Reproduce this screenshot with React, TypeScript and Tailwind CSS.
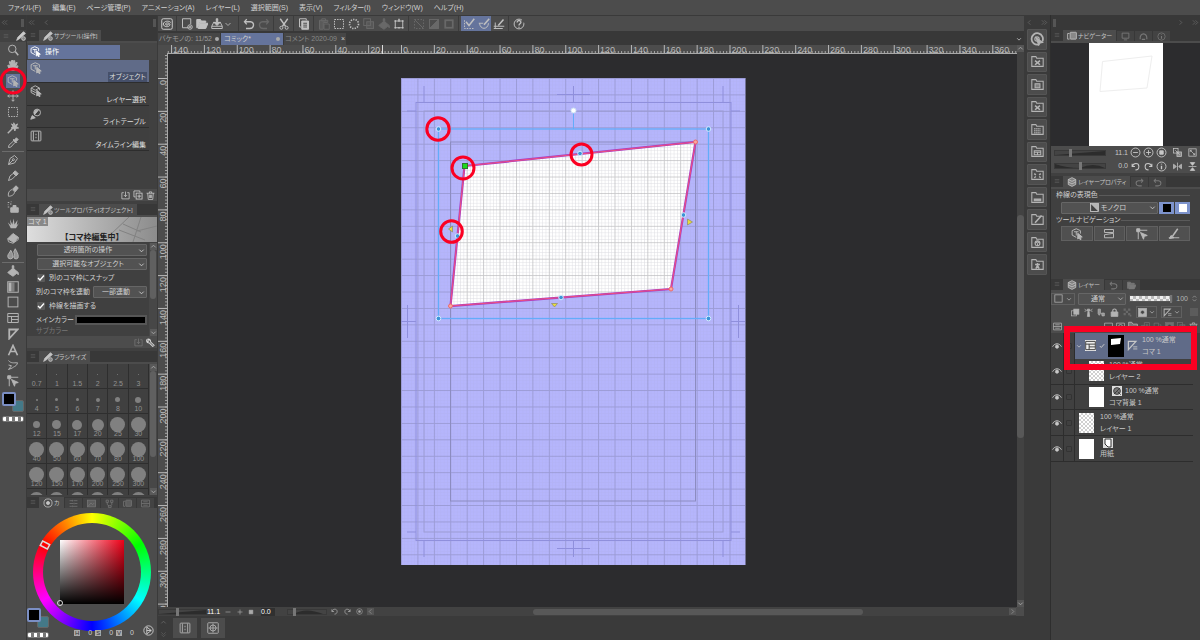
import type { ReactNode } from "react";
import clsx from "clsx";

const icons = {
  menu: <path d="M2 4h12M2 8h12M2 12h12" />,
  left: <path d="M10 3 5 8l5 5" />,
  right: <path d="m6 3 5 5-5 5" />,
  dleft: <path d="M8 3 3 8l5 5M14 3 9 8l5 5" />,
  dright: <path d="m2 3 5 5-5 5M8 3l5 5-5 5" />,
  down: <path strokeWidth="2" d="m3 6 5 5 5-5" />,
  up: <path strokeWidth="2" d="m3 10 5-5 5 5" />,
  ddown: <path d="m3 3 5 5 5-5M3 8l5 5 5-5" />,
  updown: <path d="m4 6 4-4 4 4M4 10l4 4 4-4" />,
  search: <><circle cx="7" cy="6.500" r="5" /><path d="m11 10 4 5" strokeWidth="2" /></>,
  hand: <path fill="currentColor" d="M4 15 1 9l1-1 3 2-2-6 1-1 2 5V2h2v6l1-6 1.500.5L9.500 8l3-4 1 1-2 5 3-1v1l-3 5z" />,
  object: <><path d="M7 12.500 1.500 9.500v-6L7 1l5.500 2.500v4M4 5h6M7 5v5" /><path fill="currentColor" d="m9 7 6 5-2.800.3L13.500 15l-1.300.5-1.200-2.500-2 1.700z" /></>,
  layerPick: <><path d="m1.500 4 5.500-3 5.500 3L7 7zM1.500 7 7 10l1.500-.8M1.500 10 7 13M1.500 4v6M12.500 4v3" /><path fill="currentColor" d="m9 7 6 5-2.800.3L13.500 15l-1.300.5-1.200-2.500-2 1.700z" /></>,
  move: <path d="M8 1v14M1 8h14M6 3l2-2 2 2M6 13l2 2 2-2M3 6 1 8l2 2M13 6l2 2-2 2" />,
  marquee: <rect x="2" y="2" width="12" height="12" strokeDasharray="2 1.400" />,
  wand: <><path d="m1 15 7-7" strokeWidth="2" /><path fill="currentColor" d="m9 1 1.500 3.500L14 2.500l-1.500 3.700L15.500 8l-4 .5L10.500 12 9 8.500 5.500 8l2.500-2-2-3.500 3 2z" /></>,
  dropper: <><path d="m2 14 .5-3L9 5l2 2-6 6.500z" /><path fill="currentColor" d="m8 4 1-1 1 1 2.500-3 2.500 2.500L12 6l1 1-1 1z" /></>,
  pen: <><path d="m2 14 2-8 6-4 4 4-4 6z" /><path d="m2 14 6-6" /><circle cx="8.500" cy="7.500" r="1.300" /></>,
  pencil: <><path d="m2 14 2-6 5-4 3 3-5 5z" /><path fill="currentColor" d="m8 4 3-3 4 4-3 3z" /></>,
  brush: <><path d="M2 15c-1-4 1-8 5-9l3 3c0 4-4 6-8 6z" /><path fill="currentColor" d="m8 5 4-4 3 3-4 5z" /></>,
  airbrush: <><path fill="currentColor" d="M5 9h10v6H5zM8 6h4v3H8z" /><path d="M1 2h2M1 5h1M4 4h2M1 8h2M5 1h1" /></>,
  grass: <path fill="currentColor" stroke="none" d="M5 15 1 7l4 4-1-8 3 7 2-8 1 8 4-6-1 7 3-3-4 7z" />,
  eraser: <><path fill="currentColor" d="m1 9 7-7 7 5-6 7z" /><path d="m1 9 1 4 6 2 7-5V7" /></>,
  blend: <path fill="currentColor" d="M5 3c2 4 3 5 3 8a3.500 3.500 0 0 1-7 0c0-3 3-5 4-8zm6-2c2 4 4 7 4 10a3 3 0 0 1-6 1c2-3 0-6 0-7z" fillOpacity=".7" />,
  bucket: <path fill="currentColor" d="m1 10 6-5V1h2v4l6 5v3l-2-2-5 4-6-4z" />,
  gradient: <><rect x="1" y="1" width="14" height="14" /><path stroke="none" fill="currentColor" d="M2 2h4v12H2z" /><path stroke="none" fill="currentColor" fillOpacity=".5" d="M6 2h4v12H6z" /></>,
  rect: <rect x="1.500" y="1.500" width="13" height="13" />,
  frame: <path d="M1 2h14v12H1zM1 6h14M6 6v8M6 10h9" />,
  ruler: <path strokeWidth="2.400" d="M3 14V2h11z" />,
  letter: <path strokeWidth="2.200" d="M2 15 8 2l6 13M4.500 10h7" />,
  balloon: <path d="M2 2c3 4 7 3 12 3-1 5-5 5-7 7l-5 2 4-5-4-1" />,
  node: <><path d="M1 3h4M5 3h10M3 5v10" /><path fill="currentColor" d="M1 1h4v4H1zM6 6l9 4-4 1-1 4z" /></>,
  spiral: <><rect x="1" y="1" width="14" height="14" rx="2" /><path d="M13 6C10 3 4 4 3 8c0 4 8 5 9 1 0-3-6-3-6-1 0 2 4 2 4 0" /></>,
  fileNew: <><path d="M10 13H2V1h11v7" /><circle cx="12" cy="12" r="3" /><path d="M12 10.500v3M10.500 12h3" /></>,
  open: <path fill="currentColor" d="M1 13V2h5l1 2h6v2H5l-3 7zM5 7h11l-3 7H3z" />,
  save: <><path fill="currentColor" d="M7 1h2v5h3l-4 4-4-4h3z" /><path d="M4 5 1 11v3h14v-3l-3-6M1 11h14" /></>,
  undo: <path strokeWidth="1.800" d="M5 1.500 2 5l3 3.500M2 5h8c6 1 5 9-1 9H4" />,
  redo: <path strokeWidth="1.800" d="m11 1.500 3 3.500-3 3.500M14 5H6c-6 1-5 9 1 9h5" />,
  cut: <><path strokeWidth="1.800" d="m3 1 7 10M13 1 6 11" /><circle cx="4.500" cy="13" r="2" /><circle cx="11.500" cy="13" r="2" /></>,
  copy: <><path d="M4 12H2V1h9v2" /><path fill="currentColor" d="M5 4h9v11H5z" /><path stroke="#4c4c4c" d="M7 7h5M7 9.500h5M7 12h5" /></>,
  paste: <><path fill="currentColor" fillOpacity=".5" d="M2 3h11v3H7v9H2z" /><path d="M5 1h5v3H5zM8 8h7v7H8z" /></>,
  dots: <circle cx="8" cy="8" r="6" strokeWidth="2.200" strokeDasharray="1.700 1.600" />,
  stack: <><rect x="1" y="1" width="9" height="9" /><rect x="5" y="5" width="9" height="9" fill="currentColor" fillOpacity=".4" /></>,
  transform: <><rect x="3" y="4" width="10" height="9" /><path strokeWidth="2" d="M2 4h2M12 4h2M2 13h2M12 13h2M7 4h2M7 13h2M8 1v2" /></>,
  slash: <><rect x="2" y="2" width="12" height="12" strokeDasharray="2 2" /><path d="m2 2 12 12" /></>,
  half: <><rect x="2" y="2" width="12" height="12" /><path fill="currentColor" d="M14 2v12H2z" /></>,
  thick: <rect x="3" y="3" width="10" height="10" strokeWidth="2.400" />,
  snap: <><path d="M2 3v11h12" strokeDasharray="2 1.500" /><path strokeWidth="2" d="m4 5 4 5 7-9" /></>,
  snapCurve: <><path d="M1 7h6M2 7c1 9 11 9 12 0" /><path strokeWidth="2" d="m8 9 7-8" /></>,
  snapGrid: <><path d="M1 11h14M1 14h12M3 6v8" /><path strokeWidth="2" d="m7 10 7-8" /></>,
  help: <><circle cx="8" cy="8" r="6.500" strokeDasharray="34 4" /><path strokeWidth="1.800" d="M5.500 6c0-4 5.500-3 5 0-.5 2-2.500 1.500-2.500 4M8 11.500v1.500" /></>,
  toolTab: <><path fill="currentColor" d="m1 15 2-5 9-9 3 3-9 8z" /><circle cx="12" cy="12" r="3" fill="currentColor" fillOpacity=".5" /></>,
  bulb: <><circle cx="9.500" cy="6" r="4.500" /><path fill="currentColor" d="m1 15 2-5 4 3zM6 5c1-2 3-3 5-2L6 9z" /></>,
  film: <><rect x="1.500" y="1.500" width="13" height="13" rx="1" /><path d="M4.500 2v12M11.500 2v12M8 5v2M8 9v2" /></>,
  target: <><rect x="1" y="1" width="14" height="14" rx="1" /><circle cx="8" cy="8" r="4" /><path d="M8 2v12M2 8h12" /></>,
  addDown: <><path d="M5 3H1.500v11h13V3H11" /><path d="M8 1v9M5 7l3 3 3-3" /></>,
  addCopy: <><path d="M4 11H1.500V1.500H11V4" /><rect x="5" y="5" width="9.500" height="9.500" /><path d="M9.800 7v6M7 9.800h6" /></>,
  trash: <><path d="M1 4h14M6 4V1.500h4V4M3 4l1 11h8l1-11M6 6.500v6M8 6.500v6M10 6.500v6" /></>,
  wrench: <path strokeWidth="1.800" d="M14.500 13 8 7c1-3-2-6-5-5l2.500 2.500-2 2L1 4c0 3 2 5 5 5l6 6z" />,
  ring: <><circle cx="8" cy="8" r="6.500" /><circle cx="8" cy="8" r="2.500" fill="currentColor" /></>,
  sliders: <path d="M1 3h5M8 3h7M1 8h7M10 8h5M1 13h4M7 13h8M6 1.500v3M9 6.500v3M6 11.500v3" />,
  photo: <><rect x="1" y="2" width="14" height="12" fill="currentColor" fillOpacity=".5" /><path d="m2 13 5-6 3 3 3-3" /></>,
  swatches: <path d="M2 2h4v4H2zM10 2h4v4h-4zM6 12h5v3H6zM4 6v4l3 2M12 6v4l-2 2" />,
  layers: <path fill="currentColor" fillOpacity=".45" d="M8 1 2 4v8l6 3 6-3V4zM2 4l6 3 6-3M2 8l6 3 6-3" />,
  docs: <><path d="M4 13H1V4h3" /><rect x="5" y="2" width="10" height="11" rx="1" fill="currentColor" fillOpacity=".5" /></>,
  info: <><circle cx="8" cy="8" r="6.500" /><path strokeWidth="2" d="M8 7v5M8 4v1" /></>,
  arch: <path strokeWidth="2" d="M2 13c-1-13 13-13 12 0M5 13h6" />,
  monitor: <path strokeWidth="1.600" d="M2 2h12v9H2zM5 14h6" />,
  minusO: <><circle cx="8" cy="8" r="6.500" /><path d="M4.500 8h7" /></>,
  plusO: <><circle cx="8" cy="8" r="6.500" /><path d="M4.500 8h7M8 4.500v7" /></>,
  squareO: <><circle cx="8" cy="8" r="6.500" /><path fill="currentColor" d="M5.500 5.500h5v5h-5z" /></>,
  minus: <path d="M3 8h10" />,
  plus: <path d="M3 8h10M8 3v10" />,
  stop: <path fill="currentColor" d="M3 3h10v10H3z" />,
  fit: <><rect x="1" y="1" width="8" height="8" /><rect x="7" y="7" width="8" height="8" fill="currentColor" fillOpacity=".5" /><path d="m4 4 8 8" /></>,
  expand: <><rect x="1.500" y="1.500" width="13" height="13" /><path d="m4 4 8 8M4 7V4h3M12 9v3H9" /></>,
  ccw: <path strokeWidth="1.800" d="M2 3v5h5M2.500 8C4 1 14 1 14 8c0 4-3 6-6 6" />,
  cw: <path strokeWidth="1.800" d="M14 3v5H9M13.500 8C12 1 2 1 2 8c0 4 3 6 6 6" />,
  flipH: <path fill="currentColor" d="M8 1v14M15 4v8l-5-4zM1 4v8l5-4z" fillOpacity=".7" />,
  flipV: <path fill="currentColor" d="M1 8h14M4 1h8L8 6zM4 15h8l-4-5z" />,
  quick: <><path strokeWidth="2" d="M14 11A6.500 6.500 0 1 0 10 14.200" /><path fill="currentColor" d="M7 6.500 14.500 12l-3 .5-1.500 2.500z" /><circle cx="8" cy="8" r="2.500" /></>,
  mono: <><rect x="1" y="1" width="14" height="14" fill="currentColor" fillOpacity=".8" /><path fill="#444" stroke="none" d="M2 2v12h12z" /></>,
  cutFrame: <path d="M2 6V2h12v4zM2 9l12-2v6H2z" />,
  lineTool: <><path strokeWidth="2" d="M6 11 13 1" /><path d="M1 13h14" /><path fill="currentColor" d="m2 14 2-4 4 3z" /></>,
  eye: <><path strokeWidth="1.600" d="M1 9c3-6 11-6 14 0" /><circle cx="8" cy="9" r="2.500" fill="currentColor" /></>,
  mask: <><rect x="1" y="1" width="14" height="14" fill="currentColor" /><circle cx="8" cy="7.500" r="3.500" fill="#444" /></>,
  tone: <><circle cx="8" cy="8" r="5.500" fill="#777" /><path d="m9 9 5 5M3 13l10-10" /></>,
  rulerTri: <><path strokeWidth="1.800" d="M2 14V2h11z" /><path d="M9 10h6M9 13h6" /></>,
  clip: <><rect x="1" y="5" width="9" height="9" /><rect x="5" y="2" width="9" height="9" fill="currentColor" /></>,
  lighthouse: <path fill="currentColor" d="M6 2h4l1 3H5zM7 6h2l1 9H6zM1 2l3 2M15 2l-3 2M1 6l3-1M15 6l-3-1" />,
  quill: <path fill="currentColor" d="M2 2h4v8l-2 3-2-3zM8 9h5v5H9z" fillOpacity=".7" />,
  lock: <><path fill="currentColor" d="M2 7h12v8H2z" /><path strokeWidth="2" d="M5 7V4c0-3 6-3 6 0v3" /></>,
  checker: <path stroke="none" fill="currentColor" d="M1 1h4v4H1zM9 1h4v4H9zM5 5h4v4H5zM1 9h4v4H1zM9 9h4v4H9zM12 12h3v3h-3z" />,
  palette: <path d="M1 2h14v12H1zM1 8h14M4 5h8M4 11h8" />,
  rasterAdd: <path d="M8 14H1V2h14v8M12 10v5M9.500 12.500h5" />,
  vectorAdd: <><path d="M1 2h14v12H1z" /><circle cx="8" cy="8" r="3.500" /></>,
  folder: <path fill="currentColor" fillOpacity=".4" d="M1 14V2h5l2 3h7v9z" />,
  transfer: <path d="M6 6H1v9h8v-3M6 1h9v9H6zM8 5.500h5M10.500 3v5" />,
  merge: <path d="M2 2h8v6H2zM6 10v4h8V5h-2" />,
  check: <path strokeWidth="2.600" d="m2 8 4 4 8-9" />,
  play: <><circle cx="8" cy="8" r="6.800" /><path d="m5.500 3 6.500 5-6.500 5zM5.500 8H12" /></>,
  folderX: <path strokeWidth="2" d="m5 7 6 5M11 7l-6 5" />,
  folderTone: <path strokeWidth="1.800" strokeDasharray="1.500 1" d="M4 7h8M4 9.500h8M4 12h8" />,
  folderBox: <path fill="currentColor" fillOpacity=".5" d="M5 7h6v5H5z" />,
  folderFrame: <path d="M4 7h8v5H4zM4 9h8M8 9v3" />,
  folderMove: <path strokeWidth="1.800" d="m4 7 2 1.500M12 7l-2 1.500M4 12l2-1.500M12 12l-2-1.500" />,
  folderImg: <path fill="currentColor" d="M4 10h8v2H4z" />,
  folderEdit: <path strokeWidth="2" d="m5 12 8-9" />,
  folderUser: <><circle cx="8" cy="9" r="3" /><path d="m5 9 3-2 3 2M8 9v3" /></>,
  folderMan: <path strokeWidth="1.800" d="M8 6v3M5 8h6M8 9l-2 4M8 9l2 4" />,
};

type IconName = keyof typeof icons;

function Icon({ name, className = "size-3" }: { name: IconName; className?: string }) {
  return (
    <svg viewBox="0 0 16 16" fill="none" stroke="currentColor" strokeWidth="1.300" className={clsx("shrink-0", className)}>
      {icons[name]}
    </svg>
  );
}

function PanelTabs({ icon, title, extra = [] }: { icon: IconName; title: string; extra?: IconName[] }) {
  return (
    <div className="flex h-[13px] shrink-0 items-end border-b-2 border-[#4c4c4c] bg-[#383838]">
      <Icon name="menu" className="mx-[3px] mb-[3px] size-[6px] text-[#666]" />
      <div className="flex h-[11px] items-center gap-px bg-[#4c4c4c] px-1 text-[#c4c4c4]">
        <Icon name={icon} className="size-[10px]" />
        <h2 className="text-[6px] whitespace-nowrap">{title}</h2>
      </div>
      {extra.map((name) => (
        <button key={name} aria-label={name} className="ml-px flex h-[10px] w-[17px] items-center justify-center bg-[#434343] text-[#787878]">
          <Icon name={name} className="size-[9px]" />
        </button>
      ))}
    </div>
  );
}

function Select({ label, value, className, icon }: { label: string; value: string; className?: string; icon?: IconName }) {
  return (
    <div className={clsx("grid h-3 items-center rounded-[1px] border border-[#666] bg-[#525252]", className)}>
      <select
        aria-label={label}
        className={clsx(
          "col-start-1 row-start-1 h-[10px] w-full appearance-none pr-2 text-center [text-align-last:center] leading-[10px] text-[#d0d0d0]",
          icon && "pl-4",
        )}
      >
        <option>{value}</option>
      </select>
      {icon && <Icon name={icon} className="pointer-events-none col-start-1 row-start-1 ml-7 size-[9px]" />}
      <Icon name="down" className="pointer-events-none col-start-1 row-start-1 mr-px size-[7px] justify-self-end" />
    </div>
  );
}

function Check({ label }: { label: string }) {
  return (
    <label className="flex items-center gap-1 pl-[10px]">
      <span className="grid size-2 items-center rounded-[1px] bg-[#5a5a5a]">
        <input type="checkbox" defaultChecked className="peer col-start-1 row-start-1 size-2 appearance-none" />
        <Icon name="check" className="pointer-events-none invisible col-start-1 row-start-1 size-2 text-white peer-checked:visible" />
      </span>
      {label}
    </label>
  );
}

function Slider({ label, value, curve, className }: { label: string; value: number; curve: string; className: string }) {
  return (
    <div className={clsx("grid items-center", className)}>
      <svg viewBox="0 0 52 8" preserveAspectRatio="none" className="col-start-1 row-start-1 h-[6px] w-full border border-[#393939] bg-[#444]">
        <path d={curve} fill="#2c2c2c" />
      </svg>
      <input
        type="range"
        aria-label={label}
        defaultValue={value}
        className="col-start-1 row-start-1 h-2 w-full min-w-0 appearance-none bg-transparent [&::-webkit-slider-thumb]:h-2 [&::-webkit-slider-thumb]:w-[3px] [&::-webkit-slider-thumb]:appearance-none [&::-webkit-slider-thumb]:bg-[#777]"
      />
    </div>
  );
}

function Scroll({ thumb }: { thumb: string }) {
  return (
    <div className="flex w-2 shrink-0 flex-col items-center bg-[#474747] text-[#aaa]">
      <Icon name="up" className="size-[7px] bg-[#595959]" />
      <div className="w-full flex-1">
        <div className={clsx("mx-px rounded-sm bg-[#606060]", thumb)} />
      </div>
      <Icon name="down" className="size-[7px] bg-[#595959]" />
    </div>
  );
}

// main and sub colour with the transparent swatch under them
function ColorChips() {
  return (
    <div className="relative h-[30px] w-[22px]">
      <button aria-label="サブカラー" className="absolute top-2 left-[10px] size-3 rounded-[2px] border border-[#666] bg-[#447988]" />
      <button aria-label="メインカラー" className="absolute top-0 left-0 size-[14px] rounded-[2px] border-2 border-[#7b8fc4] bg-black" />
      <button aria-label="透明色" className="absolute bottom-0 left-0 h-[6px] w-[22px] rounded-[2px] border border-[#777] bg-[repeating-linear-gradient(90deg,#fff_0_3px,#777_3px_6px)]" />
    </div>
  );
}

const menus = ["ファイル(F)", "編集(E)", "ページ管理(P)", "アニメーション(A)", "レイヤー(L)", "選択範囲(S)", "表示(V)", "フィルター(I)", "ウィンドウ(W)", "ヘルプ(H)"];

const tools: { className: string; items: IconName[] }[] = [
  { className: "h-[110px] grid-rows-7", items: ["search", "hand", "object", "move", "marquee", "wand", "dropper"] },
  { className: "h-[111px] grid-rows-7", items: ["pen", "pencil", "brush", "airbrush", "grass", "eraser", "blend"] },
  { className: "h-[126px] grid-rows-8", items: ["bucket", "gradient", "rect", "frame", "ruler", "letter", "balloon", "node"] },
];

function ToolBar() {
  return (
    <aside className="flex w-[26px] shrink-0 flex-col bg-[#4c4c4c]">
      <div className="flex h-[15px] items-center justify-between bg-[#383838] pr-[2px] pl-px text-[#777]">
        <Icon name="dleft" className="size-[7px]" />
        <span className="h-2 w-[3px] bg-[#555]" />
      </div>
      <div className="flex h-3 items-center bg-[#424242]">
        <Icon name="menu" className="mx-[3px] size-[6px] text-[#666]" />
        <Icon name="toolTab" className="ml-1 size-[10px] text-[#ccc]" />
      </div>
      {tools.map((group, i) => (
        <div key={group.items[0]} className={clsx("mx-[2px] grid", i < 2 && "border-b border-[#6c6c6c]", group.className)}>
          {group.items.map((name) => (
            <button key={name} aria-label={name} className="relative flex items-center justify-center text-[#b4b4b4]">
              <span className={clsx("flex size-[14px] items-center justify-center", name === "object" && "bg-[#65749c]")}>
                <Icon name={name} />
              </span>
              {name === "object" && (
                <svg viewBox="0 0 28 28" className="absolute z-10 size-7">
                  <circle cx="14" cy="14" r="12" fill="none" stroke="#fb0022" strokeWidth="3" />
                </svg>
              )}
            </button>
          ))}
        </div>
      ))}
      <div className="mt-[3px] ml-[2px]">
        <ColorChips />
      </div>
    </aside>
  );
}

const subTools: { icon: IconName; name: string }[] = [
  { icon: "object", name: "オブジェクト" },
  { icon: "layerPick", name: "レイヤー選択" },
  { icon: "bulb", name: "ライトテーブル" },
  { icon: "film", name: "タイムライン編集" },
];

function SubToolPanel() {
  return (
    <section className="mb-[3px]">
      <PanelTabs icon="toolTab" title="サブツール[操作]" />
      <div className="flex h-[17px] items-center bg-[#464646] pl-px">
        <button className="flex h-[14px] w-[92px] items-center gap-1 bg-[#65749c] pl-[2px] text-white">
          <Icon name="object" className="size-[11px]" />
          操作
        </button>
      </div>
      <ul className="mr-2 grid h-[91px] grid-rows-4">
        {subTools.map((tool, i) => (
          <li key={tool.name} className={clsx("border-b border-[#2d2d2d]", i === 0 ? "bg-[#606b88]" : "bg-[#3f3f3f]")}>
            <button className="flex h-full w-full justify-between pt-[2px] pr-[2px] pl-[3px] text-[#dcdcdc]">
              <Icon name={tool.icon} className="size-3 text-[#b8b8b8]" />
              <span className={clsx("self-end px-px leading-[10px]", i === 0 && "bg-[#46506a]")}>{tool.name}</span>
            </button>
          </li>
        ))}
      </ul>
      <div className="h-[38px]" />
      <div className="flex h-3 items-center justify-end gap-[3px] bg-[#4c4c4c] pr-[2px]">
        <Icon name="addDown" className="size-[9px]" />
        <Icon name="addCopy" className="size-[10px]" />
        <Icon name="trash" className="size-[9px]" />
      </div>
    </section>
  );
}

function ToolProperty() {
  return (
    <section className="mb-[3px]">
      <PanelTabs icon="toolTab" title="ツールプロパティ[オブジェクト]" />
      <div className="relative flex h-[25px] items-end justify-center bg-linear-to-r from-[#dedede] to-[#8c8c8c]">
        <svg viewBox="0 0 130 25" className="absolute inset-0 size-full" fill="none" stroke="#828282">
          <path d="M102 0 82 19M96 7l18 8M114 0l-8 25M92 13l26 10M110 14l20-5" />
        </svg>
        <span className="absolute top-0 left-0 bg-[#888] px-px leading-[9px] text-[#ddd]">コマ 1</span>
        <strong className="relative text-[8px] leading-[9px] font-bold text-[#222]">【コマ枠編集中】</strong>
      </div>
      <div className="flex h-[94px] pt-px">
        <div className="grid min-w-0 flex-1 grid-rows-[repeat(6,14px)_8px] items-center overflow-hidden pr-[2px] whitespace-nowrap">
          <Select label="透明箇所" value="透明箇所の操作" className="ml-[10px]" />
          <Select label="対象" value="選択可能なオブジェクト" className="ml-[10px]" />
          <Check label="別のコマ枠にスナップ" />
          <div className="flex items-center justify-between pl-[9px]">
            <span>別のコマ枠を連動</span>
            <Select label="別のコマ枠を連動" value="一部連動" className="w-[54px]" />
          </div>
          <Check label="枠線を描画する" />
          <div className="flex items-center justify-between pl-[9px]">
            <span>メインカラー</span>
            <button aria-label="メインカラー" className="h-[10px] w-[72px] border-2 border-[#565656] bg-black" />
          </div>
          <span className="pl-[9px] leading-[8px] text-[#777]">サブカラー</span>
        </div>
        <Scroll thumb="h-[49px]" />
      </div>
      <div className="flex h-3 items-center justify-end gap-[3px] bg-[#4c4c4c] pr-[2px]">
        <Icon name="addDown" className="size-[9px] text-[#777]" />
        <Icon name="wrench" className="size-[9px]" />
      </div>
    </section>
  );
}

const brushes = [
  ["0.7", 1], ["1", 1], ["1.5", 1], ["2", 1], ["2.5", 1], ["3", 1],
  ["4", 2], ["5", 3], ["6", 3], ["7", 4], ["8", 5], ["10", 6],
  ["12", 7], ["15", 9], ["17", 10], ["20", 12], ["25", 15], ["30", 15],
  ["40", 15], ["50", 15], ["60", 15], ["70", 15], ["80", 15], ["100", 15],
  ["120", 15], ["150", 15], ["170", 15], ["200", 15], ["250", 15], ["300", 15],
] as const;

const nextBrushes = [400, 500, 600, 700, 800, 1000];

function BrushSize() {
  return (
    <section className="mb-[2px]">
      <PanelTabs icon="toolTab" title="ブラシサイズ" />
      <div className="flex h-[131px]">
        <div className="grid flex-1 auto-rows-[25px] grid-cols-6 overflow-hidden">
          {brushes.map(([size, dot]) => (
            <button key={size} className="flex flex-col items-center border-r border-b border-[#2e2e2e] pt-[3px] text-[#929292]">
              <span className="flex h-[15px] items-center">
                <span className="rounded-full bg-[#808080]" style={{ width: dot, height: dot }} />
              </span>
              <span className="-mt-[3px] leading-[9px]">{size}</span>
            </button>
          ))}
          {nextBrushes.map((size) => (
            <button key={size} aria-label={`${size}`} className="flex justify-center border-r border-[#2e2e2e] pt-[3px]">
              <span className="size-[15px] rounded-full bg-[#808080]" />
            </button>
          ))}
        </div>
        <Scroll thumb="h-[86px]" />
      </div>
    </section>
  );
}

function ColorWheel() {
  return (
    <section className="flex flex-1 flex-col bg-[#4c4c4c]">
      <PanelTabs icon="ring" title="カ" extra={["sliders", "photo", "swatches", "docs", "palette"]} />
      <div className="relative flex flex-1 justify-center pt-[3px]">
        <div className="flex size-[118px] items-center justify-center rounded-full bg-[conic-gradient(#ff0,#0f0_60deg,#0ff_120deg,#00f_180deg,#f0f_240deg,#f00_300deg,#ff0)]">
          <div className="flex size-[98px] items-center justify-center rounded-full bg-[#4c4c4c]">
            <div className="size-16 bg-[linear-gradient(to_top,#000,transparent),linear-gradient(to_right,#fff,#f00018)]" />
          </div>
        </div>
        <svg viewBox="0 0 130 128" className="absolute top-0 left-0 h-32 w-[130px]" fill="none" stroke="#ddd">
          <circle cx="33" cy="93" r="2.500" />
          <rect x="-4" y="-2.500" width="8" height="5" transform="translate(18 35) rotate(28)" strokeWidth="1.500" />
        </svg>
        <div className="absolute bottom-[2px] left-0">
          <ColorChips />
        </div>
        <div className="absolute right-[3px] bottom-0 flex items-center gap-[3px]">
          {["H", "S", "V"].map((c) => (
            <span key={c} className="flex items-center gap-2 leading-[9px]">
              <span className="bg-[#aaa] px-px text-[6px] leading-[6px] text-[#333]">{c}</span>0
            </span>
          ))}
          <Icon name="play" className="mb-1 ml-[6px] size-[11px]" />
        </div>
      </div>
    </section>
  );
}

const toolbarGroups: { items: IconName[]; dim?: IconName[]; on?: IconName[] }[] = [
  { items: ["fileNew", "open", "save"] },
  { items: ["undo", "redo"], dim: ["redo"] },
  { items: ["cut"] },
  { items: ["copy"] },
  { items: ["paste", "marquee", "dots", "stack", "bucket", "transform"], dim: ["paste", "stack", "bucket"] },
  { items: ["slash", "half", "thick"], dim: ["slash", "half", "thick"] },
  { items: ["snap", "snapCurve", "snapGrid"], on: ["snap", "snapCurve"] },
  { items: ["help"] },
];

function CommandBar() {
  return (
    <div className="mt-px flex h-[15px] items-center bg-[#4c4c4c]">
      <button aria-label="CLIP STUDIO" className="flex w-[18px] items-center justify-center">
        <Icon name="spiral" />
      </button>
      {toolbarGroups.map((group) => (
        <div key={group.items[0]} className="flex h-[15px] items-center border-l border-[#3c3c3c] px-[2px]">
          {group.items.map((name) => (
            <button
              key={name}
              aria-label={name}
              className={clsx(
                "flex h-[15px] w-[15px] items-center justify-center",
                group.on?.includes(name) && "bg-[#65749c]",
                group.dim?.includes(name) ? "text-[#686868]" : "text-[#c0c0c0]",
              )}
            >
              <Icon name={name} />
            </button>
          ))}
          {group.items[0] === "fileNew" && <Icon name="down" className="mr-1 size-2 text-[#aaa]" />}
        </div>
      ))}
    </div>
  );
}

function DocumentTabs() {
  return (
    <div className="flex h-[14px] items-center gap-px bg-[#383838] pt-px">
      <button className="flex h-3 w-[62px] items-center justify-between bg-[#464646] px-px whitespace-nowrap text-[#999]">
        <span>バケモノの: 11/52</span>
        <span className="size-[4px] rounded-full bg-[#aaa]" />
      </button>
      <button className="flex h-3 w-[62px] items-center justify-between bg-[#65749c] px-[3px]">
        コミック*
        <span className="size-[4px] rounded-full bg-[#aaa]" />
      </button>
      <button className="flex h-3 w-[62px] items-center justify-between bg-[#464646] px-px whitespace-nowrap text-[#888]">
        コメント 2020-09
        <span className="text-[#ccc]">×</span>
      </button>
      <Icon name="down" className="mr-[2px] ml-auto size-[6px]" />
    </div>
  );
}

const MM = 1.6425;
const hMarks = Array.from({ length: 26 }, (_, i) => (i - 7) * 20);
const vMarks = Array.from({ length: 17 }, (_, i) => i * 20);

function HRuler() {
  return (
    <svg className="h-[9px] w-full flex-1 bg-[#4c4c4c]" fill="#b8b8b8" stroke="none">
      <g transform="translate(234 0)">
        {Array.from({ length: 260 }, (_, i) => (
          <rect key={i} x={(i - 71) * 2 * MM} y="6" width="1" height="2" fill="#a8a8a8" />
        ))}
        {hMarks.map((m) => (
          <g key={m}>
            <rect x={m * MM} y="0" width="1" height="9" />
            <text x={m * MM + 2} y="8" fontSize="9" fontFamily="Liberation Sans, sans-serif">{Math.abs(m)}</text>
          </g>
        ))}
      </g>
      <rect y="8" width="100%" height="1" fill="#a8a8a8" />
      <rect x="215" width="1" height="9" fill="#ddd" />
    </svg>
  );
}

function VRuler() {
  return (
    <svg className="h-full w-[10px] shrink-0 bg-[#4c4c4c]" fill="#b8b8b8">
      <g transform="translate(0 24)">
        {Array.from({ length: 180 }, (_, i) => (
          <rect key={i} x="7" y={(i - 7) * 2 * MM} width="2" height="1" fill="#a8a8a8" />
        ))}
        {vMarks.map((m) => (
          <g key={m}>
            <rect x="0" y={m * MM} width="10" height="1" />
            <text transform={`translate(8 ${m * MM + 2}) rotate(-90)`} textAnchor="end" fontSize="9" fontFamily="Liberation Sans, sans-serif">{m}</text>
          </g>
        ))}
      </g>
      <rect x="9" width="1" height="100%" fill="#a8a8a8" />
    </svg>
  );
}

const cell = 10 * MM;
const quad = "63.5,88 294.5,64 270,211 49.5,228";

function Canvas() {
  return (
    <svg className="h-full w-full min-w-0 flex-1 bg-[#2c2c2e]" fill="none">
      <defs>
        <pattern id="minor" width={cell / 5} height={cell / 5} patternUnits="userSpaceOnUse">
          <path d={`M0 0H${cell}M0 0V${cell}`} stroke="#9a9aa8" strokeOpacity=".35" />
        </pattern>
        <pattern id="major" width={cell} height={cell} patternUnits="userSpaceOnUse">
          <path d={`M0 .5H${cell}M.5 0V${cell}`} stroke="#7777a5" strokeOpacity=".4" />
        </pattern>
        <pattern id="majorWhite" width={cell} height={cell} patternUnits="userSpaceOnUse">
          <path d={`M0 .5H${cell}M.5 0V${cell}`} stroke="#888" strokeOpacity=".3" />
        </pattern>
      </defs>
      <g transform="translate(233 24)">
        <rect width="344.5" height="487" fill="#b5b5fc" />
        <rect width="344.5" height="487" fill="url(#minor)" opacity=".35" />
        <rect width="344.5" height="487" fill="url(#major)" />
        <g stroke="#8f8fdc">
          <rect x="15" y="24.500" width="315" height="438" />
          <rect x="23" y="33" width="299" height="421" stroke="#9c9cd4" />
          <rect x="49.500" y="64" width="245" height="359" stroke="#8c8cc0" />
          <path d="M156 16.500h33M172.500 8v16M23 8v16M322 8v16M6 33h9M330 33h9M6 454h9M330 454h9M23 463v16M322 463v16M156 470.500h33M172.500 462v17M0 243.500h15M6.500 227v33M330 243.500h14M337.500 227v33" />
        </g>
        <polygon points={quad} fill="#fff" />
        <polygon points={quad} fill="url(#minor)" />
        <polygon points={quad} fill="url(#majorWhite)" />
        <polygon points={quad} stroke="#a43cc8" strokeWidth="2.200" />
        <polygon points={quad} stroke="#f0507c" strokeWidth="1" />
        <g stroke="#63acfa">
          <rect x="37.500" y="51" width="270" height="189.500" strokeWidth="1.300" />
          <path d="M172.500 33v18" />
        </g>
        {["37.5,51", "307.5,51", "37.5,240.5", "307.5,240.5", "179,75.5", "282.5,137", "160,219.5", "56.5,158"].map((p) => (
          <circle key={p} cx={p.split(",")[0]} cy={p.split(",")[1]} r="2.300" fill="#3b93d6" stroke="#d4ecff" />
        ))}
        <circle cx="172.500" cy="32.500" r="2.500" fill="#fff" stroke="#cfe4f4" />
        {["294.5,64", "270,211", "49.5,228"].map((p) => (
          <circle key={p} cx={p.split(",")[0]} cy={p.split(",")[1]} r="2" fill="#f8a8a0" stroke="#ee6a6a" />
        ))}
        <rect x="61.500" y="85.500" width="5" height="5" fill="#1ed81e" stroke="#2c7a2c" />
        <g fill="#e8dc3c" stroke="#84805a" strokeWidth=".6">
          <path d="m51.500 148v6l-4-3zM286.500 141v6l5-3zM150.500 225.500h6l-3 3.500z" />
        </g>
        <g stroke="#fb0022" strokeWidth="3">
          <circle cx="37" cy="51" r="11.200" />
          <circle cx="62" cy="90" r="11" />
          <circle cx="180.500" cy="76.500" r="10.500" />
          <circle cx="50.500" cy="153.500" r="10.800" />
        </g>
      </g>
    </svg>
  );
}

function CanvasFooter() {
  return (
    <div className="flex h-[9px] items-center bg-[#424242] text-[#aaa]">
      <Slider label="ズーム" value={40} curve="M0 8h52V0z" className="w-[49px]" />
      <span className="w-[17px] leading-[8px] text-white">11.1</span>
      <Icon name="minus" className="mr-1 size-2" />
      <Icon name="plus" className="mr-1 size-2" />
      <Icon name="stop" className="mr-[7px] size-[6px]" />
      <span className="mr-3 w-[14px] bg-[#303030] leading-[8px] text-white">0.0</span>
      <Slider label="回転" value={16} curve="M8 8q16-14 40 0z" className="w-10" />
      <Icon name="ccw" className="ml-1 size-[7px]" />
      <Icon name="cw" className="ml-[6px] size-[7px]" />
      <Icon name="ring" className="ml-[5px] size-[7px]" />
      <Icon name="left" className="ml-1 size-[7px] bg-[#555]" />
      <div className="flex flex-1">
        <span className="w-1/4" />
        <div className="h-[6px] w-[52%] rounded-full bg-[#585858]" />
      </div>
      <Icon name="right" className="size-[7px] bg-[#555]" />
      <span className="h-full w-2 bg-[#4c4c4c]" />
    </div>
  );
}

const materials: IconName[] = ["quick", "folderX", "folderBox", "folderX", "folderTone", "folderFrame", "folderMove", "folderImg", "folderEdit", "folderUser", "folderMan"];

function MaterialBar() {
  return (
    <aside className="flex w-[27px] shrink-0 flex-col border-r border-[#2e2e2e] bg-[#3a3a3a]">
      <div className="flex h-[13px] items-center justify-between px-[2px] pt-[2px] text-[#777]">
        <Icon name="left" className="size-[7px]" />
        <Icon name="dright" className="size-[7px]" />
      </div>
      <div className="grid h-[248px] grid-rows-11 justify-center">
        {materials.map((name, i) => (
          <button key={i} aria-label={name} className="my-px grid w-5 place-items-center rounded-[1px] border border-[#555] bg-[#4c4c4c] text-[#b4b4b4]">
            {i > 0 && (
              <svg viewBox="0 0 16 16" className="col-start-1 row-start-1 size-[13px]" fill="none" stroke="currentColor" strokeWidth="1.300">
                <path d="M1 14V2h5l1 2h8v10z" />
              </svg>
            )}
            <Icon name={name} className={clsx("col-start-1 row-start-1", i === 0 ? "size-[14px]" : "size-[13px]")} />
          </button>
        ))}
      </div>
    </aside>
  );
}

function Navigator() {
  return (
    <section className="mb-[3px]">
      <PanelTabs icon="docs" title="ナビゲーター" extra={["monitor", "arch", "info"]} />
      <div className="flex h-[103px] justify-center bg-[#2c2c2e]">
        <svg viewBox="0 0 74 103" className="h-full w-[74px] bg-white" fill="none" stroke="#eee">
          <path d="M13.500 18.500 63 13l-5 32-47 3.500z" />
        </svg>
      </div>
      <div className="grid h-[27px] grid-rows-2 bg-[#4c4c4c] px-[3px] text-[#c8c8c8]">
        <div className="flex items-center gap-[2px]">
          <Slider label="拡大率" value={30} curve="M0 8h52V0z" className="w-[52px]" />
          <span className="flex-1 text-right">11.1</span>
          <Icon name="minusO" className="size-[11px]" />
          <Icon name="plusO" className="size-[11px]" />
          <Icon name="squareO" className="mr-1 size-[11px]" />
          <Icon name="fit" className="mr-1 size-[9px]" />
          <Icon name="expand" className="size-[9px]" />
        </div>
        <div className="flex items-center gap-[2px]">
          <Slider label="回転角度" value={50} curve="M0 0q12 8 26 8H0zM26 8Q40-4 52 8z" className="w-[52px]" />
          <span className="flex-1 text-right">0.0</span>
          <Icon name="ccw" className="size-[11px] p-px" />
          <Icon name="cw" className="size-[11px] p-px" />
          <Icon name="info" className="mr-1 size-[11px]" />
          <Icon name="flipH" className="mr-1 size-[9px]" />
          <Icon name="flipV" className="size-[9px]" />
        </div>
      </div>
    </section>
  );
}

function Legend({ children }: { children: ReactNode }) {
  return (
    <h3 className="flex h-3 items-center gap-px pr-[10px] pl-[5px] whitespace-nowrap">
      {children}
      <span className="h-px flex-1 bg-[#5a5a5a]" />
    </h3>
  );
}

function LayerProperty() {
  return (
    <section className="mb-[3px] flex h-[100px] flex-col">
      <PanelTabs icon="layers" title="レイヤープロパティ" extra={["redo", "undo"]} />
      <Legend>枠線の表現色</Legend>
      <div className="flex h-[13px] items-center gap-px pr-[10px] pl-[10px]">
        <Select label="表現色" value="モノクロ" icon="mono" className="flex-1" />
        <button aria-label="黒" className="grid h-3 w-[15px] place-items-center bg-[#7d93cc]"><span className="size-2 bg-black" /></button>
        <button aria-label="白" className="grid h-3 w-[15px] place-items-center bg-[#7d93cc]"><span className="size-2 bg-white" /></button>
      </div>
      <Legend>ツールナビゲーション</Legend>
      <div className="flex h-[15px] gap-px px-[10px]">
        {(["object", "cutFrame", "node", "lineTool"] as IconName[]).map((name) => (
          <button key={name} aria-label={name} className="flex flex-1 items-center justify-center border border-[#606060] bg-[#505050] text-[#b8b8b8]">
            <Icon name={name} />
          </button>
        ))}
      </div>
    </section>
  );
}

function Layer({ indent, thumb, children }: { indent?: boolean; thumb: string; children: ReactNode }) {
  return (
    <li className="flex border-b border-[#2d2d2d]">
      <LayerToggles />
      <div className={clsx("flex min-w-0 flex-1 items-center", indent ? "gap-[5px] pl-[14px]" : "gap-[6px] pl-1")}>
        <span className={clsx("h-5 w-[15px] shrink-0", thumb)} />
        <div className="leading-[12px] whitespace-nowrap">{children}</div>
      </div>
    </li>
  );
}

function LayerToggles() {
  return (
    <>
      <button aria-label="表示" className="flex w-[13px] items-center justify-center border-r border-[#2d2d2d]">
        <Icon name="eye" className="size-[10px]" />
      </button>
      <span className="flex w-[11px] items-center justify-center border-r border-[#2d2d2d]">
        <span className="size-[6px] rounded-[1px] border border-[#333]" />
      </span>
    </>
  );
}

const transparent = "bg-white bg-[repeating-conic-gradient(#d0d0d0_0_25%,#fff_0_50%)] bg-size-[4px_4px]";

function Layers() {
  return (
    <section className="flex flex-1 flex-col">
      <PanelTabs icon="layers" title="レイヤー" extra={["undo", "open"]} />
      <div className="bg-[#4c4c4c] text-[#b4b4b4]">
        <div className="flex h-[13px] items-center gap-[3px] pr-[2px]">
          <button aria-label="パレットカラー" className="flex h-3 w-6 items-center justify-around border border-[#606060]">
            <Icon name="rect" className="size-[9px]" />
            <Icon name="down" className="size-[6px]" />
          </button>
          <Select label="合成モード" value="通常" className="w-[48px]" />
          <input
            type="range"
            aria-label="不透明度"
            defaultValue={100}
            className="h-[7px] min-w-0 flex-1 appearance-none border border-[#555] bg-[repeating-conic-gradient(#bbb_0_25%,#eee_0_50%)] bg-size-[6px_6px] [&::-webkit-slider-thumb]:h-2 [&::-webkit-slider-thumb]:w-[2px] [&::-webkit-slider-thumb]:appearance-none [&::-webkit-slider-thumb]:bg-[#777]"
          />
          <span>100</span>
          <Icon name="updown" className="size-[7px]" />
        </div>
        <div className="flex h-[14px] items-center gap-1 pl-5">
          <Icon name="clip" className="size-[9px]" />
          <Icon name="lighthouse" className="size-[9px]" />
          <Icon name="quill" className="size-[9px]" />
          <Icon name="lock" className="size-[9px]" />
          <Icon name="checker" className="size-[9px] text-[#696969]" />
          {(["mask", "rulerTri"] as IconName[]).map((name) => (
            <button key={name} aria-label={name} className="flex h-3 w-[21px] items-center justify-around border border-[#606060]">
              <Icon name={name} className="size-[9px]" />
              <Icon name="down" className="size-[6px]" />
            </button>
          ))}
          <span className="ml-1 size-2 bg-[#5c5c5c]" />
        </div>
        <div className="flex h-[14px] items-center gap-[3px] px-[2px]">
          <Icon name="palette" className="mr-auto size-[9px]" />
          <Icon name="rasterAdd" className="size-[9px]" />
          <Icon name="vectorAdd" className="size-[9px]" />
          <Icon name="folder" className="size-[10px]" />
          <Icon name="transfer" className="size-[9px] text-[#707070]" />
          <Icon name="merge" className="size-[9px] text-[#707070]" />
          <Icon name="mask" className="size-[9px] text-[#707070]" />
          <Icon name="stack" className="size-[9px] text-[#707070]" />
          <Icon name="trash" className="size-[9px]" />
        </div>
      </div>
      <ul className="mr-[7px] grid h-[129px] grid-rows-5 text-[#c8c8c8]">
        <li className="relative flex">
          <LayerToggles />
          <div className="flex min-w-0 flex-1 items-center gap-[3px] bg-[#606b88] pl-px whitespace-nowrap">
            <Icon name="down" className="size-[6px]" />
            <Icon name="frame" className="size-[11px] bg-[#eee] text-[#333]" />
            <Icon name="check" className="size-[6px]" />
            <svg viewBox="0 0 16 22" className="h-[22px] w-4 bg-black">
              <path d="m3 4 10-1-1 6-9 1z" fill="#fff" />
            </svg>
            <Icon name="rulerTri" className="size-[11px]" />
            <div className="pl-px leading-[12px]">
              100 %通常
              <br />
              コマ 1
            </div>
          </div>
          <span className="pointer-events-none absolute -top-[7px] -right-[4px] left-[13px] z-10 h-11 border-6 border-[#fb0022]" />
        </li>
        <Layer indent thumb={transparent}>
          100 %通常
          <br />
          レイヤー 2
        </Layer>
        <Layer indent thumb="bg-white">
          <span className="flex items-center gap-[3px] pl-[3px]">
            <Icon name="tone" className="size-[10px] bg-[#ddd] text-[#333]" />
            100 %通常
          </span>
          コマ背景 1
        </Layer>
        <Layer thumb={transparent}>
          100 %通常
          <br />
          レイヤー 1
        </Layer>
        <Layer thumb="bg-white">
          <svg viewBox="0 0 10 10" className="ml-[3px] size-[10px] bg-[#ddd]">
            <path d="M2 1h6v8H5L2 6z" fill="#fff" stroke="#333" />
          </svg>
          用紙
        </Layer>
      </ul>
    </section>
  );
}

function App() {
  return (
    <div className="flex h-screen flex-col overflow-hidden bg-[#3a3a3a] font-['Liberation_Sans','Noto_Sans_CJK_JP',sans-serif] text-[7px] leading-[10px] text-[#d0d0d0] [font-feature-settings:'palt']">
      <nav className="flex h-[15px] shrink-0 items-center gap-[11px] bg-[#4c4c4c] pl-2 whitespace-nowrap">
        {menus.map((menu) => (
          <button key={menu}>{menu}</button>
        ))}
      </nav>
      <div className="flex min-h-0 flex-1">
        <ToolBar />
        <aside className="ml-px flex w-[130px] shrink-0 flex-col bg-[#404040]">
          <div className="flex h-[15px] items-center gap-2 bg-[#383838] px-px text-[#777]">
            <Icon name="dleft" className="size-[7px]" />
            <Icon name="left" className="size-[7px]" />
            <span className="ml-auto h-2 w-[3px] bg-[#555]" />
          </div>
          <SubToolPanel />
          <ToolProperty />
          <BrushSize />
          <ColorWheel />
        </aside>
        <main className="ml-px flex min-w-0 flex-1 flex-col">
          <CommandBar />
          <DocumentTabs />
          <div className="flex min-h-0 flex-1">
            <div className="flex min-w-0 flex-1 flex-col">
              <div className="flex h-[9px]">
                <div className="w-[9px] bg-[#4c4c4c]" />
                <HRuler />
              </div>
              <div className="flex min-h-0 flex-1">
                <VRuler />
                <Canvas />
              </div>
            </div>
            <div className="flex w-[7px] flex-col bg-[#424242] text-[#aaa]">
              <Icon name="up" className="size-[7px] bg-[#555]" />
              <div className="flex-1 pt-[163px]">
                <div className="h-[58%] rounded-full bg-[#585858]" />
              </div>
              <Icon name="down" className="size-[7px] bg-[#555]" />
            </div>
          </div>
          <CanvasFooter />
          <div className="flex h-6 items-center gap-1 text-[#aaa]">
            <div className="flex h-full w-[11px] flex-col items-center justify-around text-[#666]">
              <Icon name="up" className="size-[7px]" />
              <Icon name="ddown" className="size-[7px]" />
            </div>
            <button aria-label="タイムライン" className="grid h-5 w-6 place-items-center bg-[#4c4c4c]"><Icon name="film" /></button>
            <button aria-label="ライトテーブル" className="grid h-5 w-6 place-items-center bg-[#4c4c4c]"><Icon name="target" /></button>
          </div>
        </main>
        <MaterialBar />
        <aside className="flex w-[149px] shrink-0 flex-col bg-[#404040]">
          <div className="flex h-[15px] items-center gap-2 bg-[#383838] px-px text-[#777]">
            <span className="mr-auto ml-px h-2 w-[3px] bg-[#555]" />
            <Icon name="right" className="size-[7px]" />
            <Icon name="dright" className="size-[7px]" />
          </div>
          <Navigator />
          <LayerProperty />
          <Layers />
        </aside>
      </div>
    </div>
  );
}

export default App;
